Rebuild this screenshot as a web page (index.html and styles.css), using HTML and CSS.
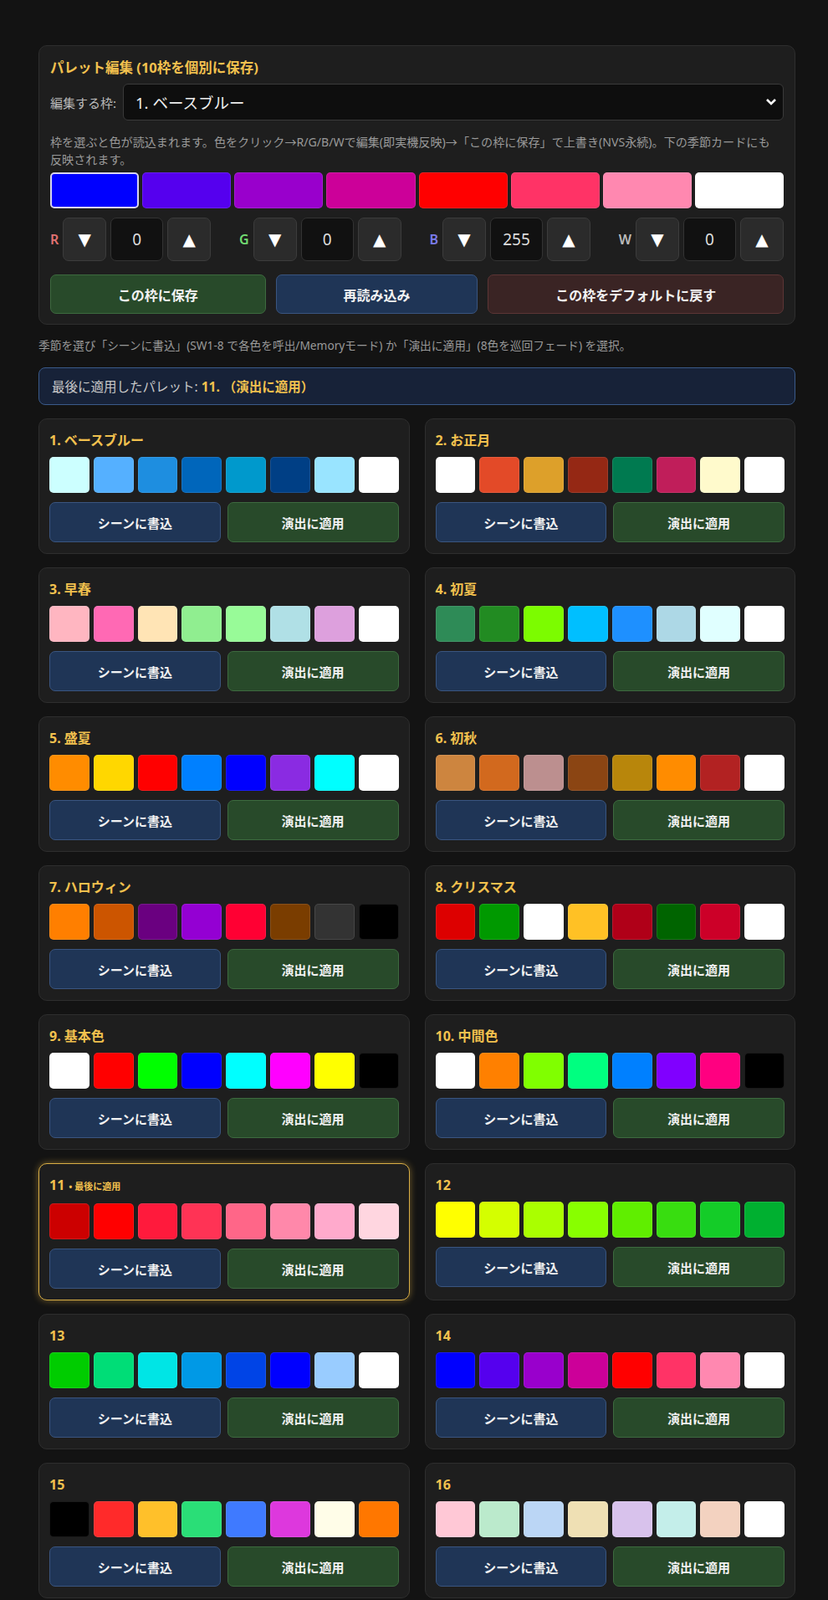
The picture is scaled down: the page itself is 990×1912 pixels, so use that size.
FILE: index.html
```html
<!doctype html>
<html lang="ja">
  <head>
    <meta charset="UTF-8" />
    <meta name="viewport" content="width=device-width, initial-scale=1.0" />
    <title>パレット</title>
    <link rel="stylesheet" href="styles.css">
  </head>
  <body>
    <div class="page">
      <div class="editor">
        <div class="editor-title">パレット編集 (10枠を個別に保存)</div>
        <div class="slot-row">
          <label class="slot-label" for="slot">編集する枠:</label>
          <div class="select-wrap">
            <select id="slot" class="slot-select">
              <option>1. ベースブルー</option>
              <option>2. お正月</option>
              <option>3. 早春</option>
            </select>
            <svg class="chevron" width="14" height="10" viewBox="0 0 14 10">
              <path d="M2 2 L7 7 L12 2" fill="none" stroke="#fff" stroke-width="2.6" />
            </svg>
          </div>
        </div>
        <p class="hint">枠を選ぶと色が読込まれます。色をクリック→R/G/B/Wで編集(即実機反映)→「この枠に保存」で上書き(NVS永続)。下の季節カードにも<br>反映されます。</p>
        <div class="edit-swatches" id="edit-swatches"></div>
        <div class="channels">
          <div class="channel">
            <span class="ch-label ch-r">R</span>
            <button class="step">▼</button>
            <div class="value">0</div>
            <button class="step">▲</button>
          </div>
          <div class="channel">
            <span class="ch-label ch-g">G</span>
            <button class="step">▼</button>
            <div class="value">0</div>
            <button class="step">▲</button>
          </div>
          <div class="channel">
            <span class="ch-label ch-b">B</span>
            <button class="step">▼</button>
            <div class="value">255</div>
            <button class="step">▲</button>
          </div>
          <div class="channel">
            <span class="ch-label ch-w">W</span>
            <button class="step">▼</button>
            <div class="value">0</div>
            <button class="step">▲</button>
          </div>
        </div>
        <div class="actions">
          <button class="btn btn-green">この枠に保存</button>
          <button class="btn btn-blue">再読み込み</button>
          <button class="btn btn-red">この枠をデフォルトに戻す</button>
        </div>
      </div>

      <p class="note">季節を選び「シーンに書込」(SW1-8 で各色を呼出/Memoryモード) か「演出に適用」(8色を巡回フェード) を選択。</p>

      <div class="status">最後に適用したパレット: <b>11. （演出に適用）</b></div>

      <div class="cards" id="cards"></div>
    </div>

    <script>
      const editColors = ["#0000ff", "#5500ee", "#9900cc", "#cc0099", "#ff0000", "#ff3366", "#ff88b0", "#ffffff"];

      const palettes = [
        ["1. ベースブルー", ["#ccffff", "#55b0ff", "#1e8ee0", "#0066bb", "#0099cc", "#003f85", "#99e4ff", "#ffffff"]],
        ["2. お正月", ["#ffffff", "#e34a28", "#dda02a", "#952814", "#007a50", "#c01e5a", "#fffacc", "#ffffff"]],
        ["3. 早春", ["#ffb6c1", "#ff69b4", "#ffe4b5", "#90ee90", "#98fb98", "#b0e0e6", "#dda0dd", "#ffffff"]],
        ["4. 初夏", ["#2e8b57", "#228b22", "#7cfc00", "#00bfff", "#1e90ff", "#add8e6", "#e0ffff", "#ffffff"]],
        ["5. 盛夏", ["#ff8c00", "#ffd700", "#ff0000", "#0080ff", "#0000ff", "#8a2be2", "#00ffff", "#ffffff"]],
        ["6. 初秋", ["#cd853f", "#d2691e", "#bc8f8f", "#8b4513", "#b8860b", "#ff8c00", "#b22222", "#ffffff"]],
        ["7. ハロウィン", ["#ff7f00", "#cc5500", "#6a0080", "#9400d3", "#ff0033", "#7a3d00", "#333333", "#000000"]],
        ["8. クリスマス", ["#dd0000", "#009900", "#ffffff", "#ffc125", "#b00018", "#006400", "#cc0028", "#ffffff"]],
        ["9. 基本色", ["#ffffff", "#ff0000", "#00ff00", "#0000ff", "#00ffff", "#ff00ff", "#ffff00", "#000000"]],
        ["10. 中間色", ["#ffffff", "#ff8000", "#80ff00", "#00ff80", "#0080ff", "#8000ff", "#ff0080", "#000000"]],
        ["11", ["#cc0000", "#ff0000", "#ff1a3c", "#ff3355", "#ff6688", "#ff88aa", "#ffaacc", "#ffd6e0"]],
        ["12", ["#ffff00", "#d4ff00", "#aaff00", "#88ff00", "#60ee00", "#38dd10", "#14cc28", "#00b030"]],
        ["13", ["#00cc00", "#00dd77", "#00e5e5", "#0099e6", "#0044e6", "#0000ff", "#99ccff", "#ffffff"]],
        ["14", ["#0000ff", "#5500ee", "#9900cc", "#cc0099", "#ff0000", "#ff3366", "#ff88b0", "#ffffff"]],
        ["15", ["#000000", "#ff2a2a", "#ffc02a", "#2ade77", "#3f7aff", "#dd38dd", "#fffde8", "#ff7700"]],
        ["16", ["#ffc8d6", "#bbeacc", "#bbd6f5", "#efe0b4", "#d8c2ec", "#c4eeea", "#f3d2c0", "#ffffff"]],
      ];
      const lastApplied = 10;

      const editSwatches = document.getElementById("edit-swatches");
      editColors.forEach((color, i) => {
        const sw = document.createElement("div");
        sw.className = i === 0 ? "edit-swatch selected" : "edit-swatch";
        sw.style.backgroundColor = color;
        editSwatches.appendChild(sw);
      });

      const cards = document.getElementById("cards");
      palettes.forEach(([name, colors], i) => {
        const card = document.createElement("div");
        card.className = i === lastApplied ? "card last" : "card";

        const title = document.createElement("div");
        title.className = "card-title";
        title.textContent = name;
        if (i === lastApplied) {
          const tag = document.createElement("span");
          tag.className = "last-tag";
          tag.textContent = "• 最後に適用";
          title.appendChild(tag);
        }
        card.appendChild(title);

        const row = document.createElement("div");
        row.className = "swatches";
        colors.forEach((color) => {
          const sw = document.createElement("div");
          sw.className = "swatch";
          sw.style.backgroundColor = color;
          row.appendChild(sw);
        });
        card.appendChild(row);

        const btns = document.createElement("div");
        btns.className = "card-actions";
        btns.innerHTML =
          '<button class="btn btn-blue">シーンに書込</button>' +
          '<button class="btn btn-green">演出に適用</button>';
        card.appendChild(btns);

        cards.appendChild(card);
      });
    </script>
  </body>
</html>
```

FILE: styles.css
```css
:root {
  --gold: #f2c14e;
  --panel-bg: #1e1e1e;
  --panel-border: #2e2e2e;
}

body {
  margin: 0;
  background-color: #131313;
  color: #ddd;
  font-family: "Noto Sans", "Noto Sans CJK JP", sans-serif;
}

.page {
  width: 905px;
  margin: 54px 0 0 46px;
}

.editor {
  background: var(--panel-bg);
  border: 1px solid var(--panel-border);
  border-radius: 10px;
  padding: 14px 13px 12px 13px;
}

.editor-title {
  color: var(--gold);
  font-size: 16.5px;
  font-weight: 700;
  line-height: 24px;
  margin-bottom: 7px;
}

.slot-row {
  display: flex;
  align-items: center;
  gap: 8px;
}

.slot-label {
  font-size: 15px;
  color: #bbb;
}

.select-wrap {
  position: relative;
  flex: 1;
}

.slot-select {
  width: 100%;
  height: 44px;
  padding: 0 14px;
  appearance: none;
  background: #0e0e0e;
  color: #eee;
  border: 1px solid #3a3a3a;
  border-radius: 6px;
  font-family: inherit;
  font-size: 18.5px;
  outline: none;
}

.chevron {
  position: absolute;
  right: 8px;
  top: 17px;
  pointer-events: none;
}

.hint {
  margin: 15px 0 5px 0;
  font-size: 14.1px;
  line-height: 21px;
  color: #999;
}

.edit-swatches {
  display: grid;
  grid-template-columns: repeat(8, 1fr);
  gap: 4px;
}

.edit-swatch {
  height: 43px;
  border-radius: 5px;
  border: 1px solid rgba(255, 255, 255, 0.12);
  box-sizing: border-box;
  cursor: pointer;
}

.edit-swatch.selected {
  border: 2px solid #d8d4f0;
}

.channels {
  display: flex;
  justify-content: space-between;
  margin-top: 11px;
}

.channel {
  display: flex;
  align-items: center;
  gap: 5px;
}

.ch-label {
  font-size: 16px;
  font-weight: 600;
  margin-right: 0;
}
.ch-r {
  color: #e07272;
}
.ch-g {
  color: #72dd72;
}
.ch-b {
  color: #7b7bea;
}
.ch-w {
  color: #bbb;
}

.step {
  width: 52px;
  height: 52px;
  background: #2b2b2b;
  border: 1px solid #3c3c3c;
  border-radius: 7px;
  color: #fff;
  font-family: "DejaVu Sans", sans-serif;
  font-size: 20px;
  padding: 0;
  cursor: pointer;
}

.value {
  width: 63px;
  height: 52px;
  box-sizing: border-box;
  display: flex;
  align-items: center;
  justify-content: center;
  background: #111;
  border: 1px solid #333;
  border-radius: 7px;
  font-size: 19px;
  color: #ddd;
}

.actions {
  display: flex;
  gap: 12px;
  margin-top: 16px;
}

.btn {
  flex: 1 1 auto;
  height: 47px;
  border-radius: 7px;
  font-family: inherit;
  font-size: 15px;
  font-weight: 700;
  color: #f2f2f2;
  cursor: pointer;
}

.actions .btn {
  font-size: 16px;
}

.btn-green {
  background: #284a2a;
  border: 1px solid #3d6a3f;
}
.btn-blue {
  background: #1f3556;
  border: 1px solid #3a5580;
}
.btn-red {
  background: #3a2424;
  border: 1px solid #5c3535;
}

.note {
  margin: 15px 0 0 0;
  font-size: 13.7px;
  line-height: 20px;
  color: #999;
}

.status {
  margin-top: 16px;
  height: 45px;
  box-sizing: border-box;
  display: flex;
  align-items: center;
  padding: 0 15px;
  background: #172238;
  border: 1px solid #3a5a8a;
  border-radius: 8px;
  font-size: 15.5px;
  color: #c8c8c8;
  white-space: pre;
}

.status b {
  color: var(--gold);
}

.cards {
  display: grid;
  grid-template-columns: 1fr 1fr;
  column-gap: 18px;
  row-gap: 16px;
  margin-top: 16px;
}

.card {
  background: var(--panel-bg);
  border: 1px solid var(--panel-border);
  border-radius: 10px;
  padding: 13px 12px;
}

.card.last {
  border-color: #d9ae45;
  box-shadow: 0 0 8px rgba(242, 193, 78, 0.45);
}

.card-title {
  color: var(--gold);
  font-size: 16px;
  font-weight: 700;
  line-height: 24px;
}

.last-tag {
  font-size: 11px;
  margin-left: 5px;
}

.swatches {
  display: grid;
  grid-template-columns: repeat(8, 1fr);
  gap: 5px;
  margin-top: 8px;
}

.swatch {
  height: 43px;
  border-radius: 5px;
  border: 1px solid rgba(255, 255, 255, 0.1);
  box-sizing: border-box;
}

.card-actions {
  display: grid;
  grid-template-columns: 1fr 1fr;
  gap: 8px;
  margin-top: 11px;
}

.card-actions .btn {
  height: 48px;
}
```
